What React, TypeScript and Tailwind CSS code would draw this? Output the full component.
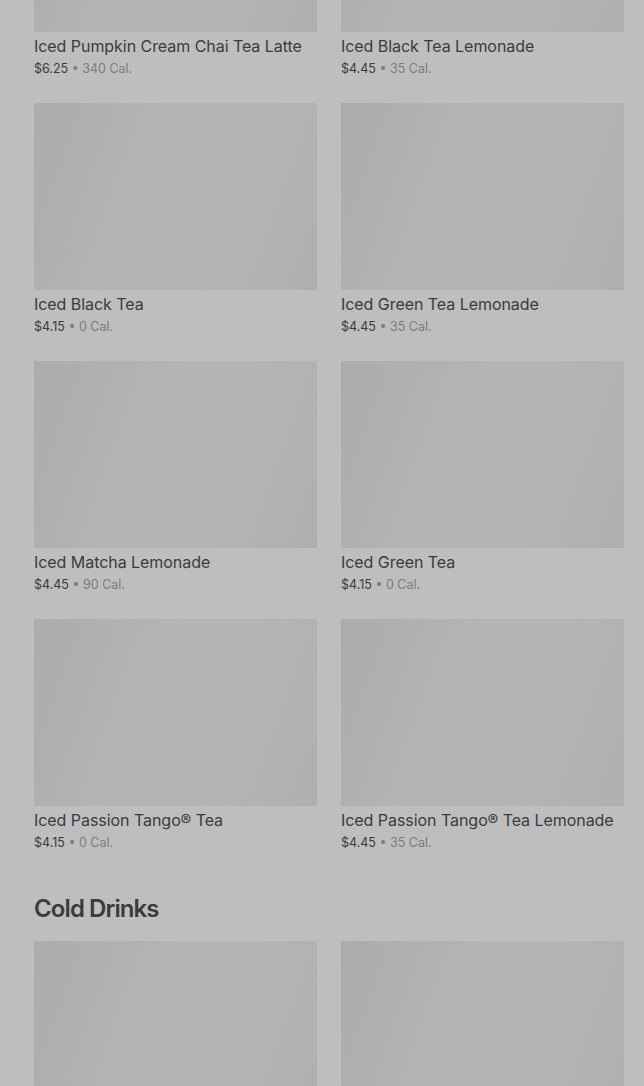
import React from "react";

type Item = { name: string; price: string; cal: string };

const tea: Item[] = [
  { name: "Iced Pumpkin Cream Chai Tea Latte", price: "$6.25", cal: "340 Cal." },
  { name: "Iced Black Tea Lemonade", price: "$4.45", cal: "35 Cal." },
  { name: "Iced Black Tea", price: "$4.15", cal: "0 Cal." },
  { name: "Iced Green Tea Lemonade", price: "$4.45", cal: "35 Cal." },
  { name: "Iced Matcha Lemonade", price: "$4.45", cal: "90 Cal." },
  { name: "Iced Green Tea", price: "$4.15", cal: "0 Cal." },
  { name: "Iced Passion Tango® Tea", price: "$4.15", cal: "0 Cal." },
  { name: "Iced Passion Tango® Tea Lemonade", price: "$4.45", cal: "35 Cal." },
];

function Img() {
  return (
    <div className="h-[187px] w-full bg-[linear-gradient(110deg,#acacac_0%,#b0b0b0_22%,#b5b5b5_42%,#b5b5b5_62%,#b2b2b2_82%,#afafaf_100%)]" />
  );
}

function Card({ item }: { item: Item }) {
  return (
    <div className="flex flex-col">
      <Img />
      <div className="mt-[2px] text-[16px] leading-[24px] text-[#3b3b3b] tracking-[-0.05px]">{item.name}</div>
      <div className="text-[12.5px] leading-[22px]">
        <span className="text-[#3b3b3b]">{item.price}</span>
        <span className="text-[#7c7c7c]"> • {item.cal}</span>
      </div>
    </div>
  );
}

export default function App() {
  return (
    <div
      className="h-[1086px] w-[644px] overflow-hidden bg-[#bebebe] pl-[34px] pr-[20px]"
      style={{ fontFamily: "Inter, 'Noto Sans', sans-serif" }}
    >
      <div className="-mt-[155px] grid grid-cols-2 gap-x-[24px] gap-y-[23px]">
        {tea.map((it) => (
          <Card key={it.name} item={it} />
        ))}
      </div>
      <h2 className="mt-[39px] mb-[16px] text-[24px] leading-[32px] font-semibold tracking-[-0.9px] text-[#3b3b3b]">
        Cold Drinks
      </h2>
      <div className="grid grid-cols-2 gap-x-[24px]">
        <Img />
        <Img />
      </div>
    </div>
  );
}
